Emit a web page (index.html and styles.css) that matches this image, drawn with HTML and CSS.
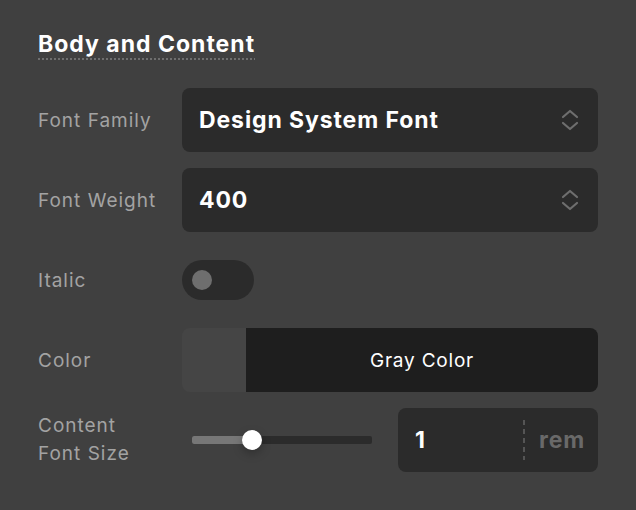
FILE: index.html
```html
<!DOCTYPE html>
<html>
<head>
<meta charset="utf-8">
<link rel="stylesheet" href="styles.css">
</head>
<body>
<div class="panel">
  <div class="title-wrap"><h2 class="title">Body and Content</h2></div>
  <div class="rows">
    <div class="label">Font Family</div>
    <div class="select">
      <span class="select-text">Design System Font</span>
      <svg class="chev" width="20" height="24" viewBox="0 0 20 24"><path d="M3 9 L10 3 L17 9 M3 15 L10 21 L17 15" fill="none" stroke="#6e6e6e" stroke-width="2.2" stroke-linecap="round" stroke-linejoin="round"/></svg>
    </div>

    <div class="label">Font Weight</div>
    <div class="select">
      <span class="select-text">400</span>
      <svg class="chev" width="20" height="24" viewBox="0 0 20 24"><path d="M3 9 L10 3 L17 9 M3 15 L10 21 L17 15" fill="none" stroke="#6e6e6e" stroke-width="2.2" stroke-linecap="round" stroke-linejoin="round"/></svg>
    </div>

    <div class="label">Italic</div>
    <div class="ctrl">
      <div class="toggle"><div class="knob"></div></div>
    </div>

    <div class="label">Color</div>
    <div class="color">
      <div class="swatch"></div>
      <div class="color-name">Gray Color</div>
    </div>

    <div class="label two">Content<br>Font Size</div>
    <div class="size">
      <div class="slider">
        <div class="track"><div class="fill"></div></div>
        <div class="thumb"></div>
      </div>
      <div class="num">
        <span class="num-val">1</span>
        <span class="sep"></span>
        <span class="unit">rem</span>
      </div>
    </div>
  </div>
</div>
</body>
</html>
```

FILE: styles.css
```css
html, body {
  margin: 0;
  padding: 0;
  background: #404040;
  width: 636px;
  height: 510px;
  overflow: hidden;
  font-family: Inter, "Noto Sans", sans-serif;
}
.panel {
  padding: 30px 38px 0 38px;
}
.title-wrap {
  display: flex;
}
.title {
  margin: 0;
  font-size: 23px;
  line-height: 28px;
  font-weight: 700;
  color: #ffffff;
  letter-spacing: 1px;
  background-image: linear-gradient(to right, #6f6f6f 2px, transparent 2px);
  background-size: 4px 2px;
  background-repeat: repeat-x;
  background-position: 0 100%;
  padding-bottom: 2px;
}
.rows {
  margin-top: 28px;
  display: grid;
  grid-template-columns: 144px 416px;
  grid-auto-rows: 64px;
  row-gap: 16px;
}
.label {
  display: flex;
  align-items: center;
  font-size: 19px;
  color: #a3a3a3;
  letter-spacing: 1px;
}
.label.two {
  line-height: 28px;
}
.select {
  background: #2b2b2b;
  border-radius: 8px;
  display: flex;
  align-items: center;
  justify-content: space-between;
  padding: 0 18px 0 17px;
}
.select-text {
  font-size: 23px;
  font-weight: 700;
  color: #ffffff;
  letter-spacing: 0.9px;
}
.chev {
  display: block;
}
.ctrl {
  display: flex;
  align-items: center;
}
.toggle {
  width: 72px;
  height: 40px;
  border-radius: 20px;
  background: #2b2b2b;
  display: flex;
  align-items: center;
  padding-left: 10px;
  box-sizing: border-box;
}
.knob {
  width: 20px;
  height: 20px;
  border-radius: 50%;
  background: #6e6e6e;
}
.color {
  display: flex;
  border-radius: 8px;
  overflow: hidden;
}
.swatch {
  width: 64px;
  background: #454545;
}
.color-name {
  flex: 1;
  background: #1e1e1e;
  display: flex;
  align-items: center;
  justify-content: center;
  color: #ffffff;
  font-size: 19px;
  letter-spacing: 0.8px;
}
.size {
  display: flex;
  align-items: center;
}
.slider {
  position: relative;
  width: 180px;
  height: 20px;
  margin-left: 10px;
  margin-right: 26px;
  display: flex;
  align-items: center;
}
.track {
  width: 100%;
  height: 8px;
  border-radius: 2px;
  background: #2b2b2b;
  overflow: hidden;
}
.fill {
  width: 60px;
  height: 100%;
  background: #777777;
}
.thumb {
  position: absolute;
  left: 50px;
  top: 0;
  width: 20px;
  height: 20px;
  border-radius: 50%;
  background: #ffffff;
  box-shadow: 0 4px 10px rgba(0,0,0,0.25);
}
.num {
  width: 200px;
  height: 64px;
  background: #2b2b2b;
  border-radius: 8px;
  display: flex;
  align-items: center;
  padding-left: 17px;
  box-sizing: border-box;
}
.num-val {
  flex: 1;
  font-size: 23px;
  font-weight: 700;
  color: #ffffff;
}
.sep {
  width: 2px;
  height: 40px;
  background-image: linear-gradient(to bottom, #555 5px, transparent 5px);
  background-size: 2px 9px;
  margin-right: 14px;
}
.unit {
  font-size: 23px;
  font-weight: 700;
  color: #696969;
  margin-right: 13px;
  letter-spacing: 0.8px;
}
```
